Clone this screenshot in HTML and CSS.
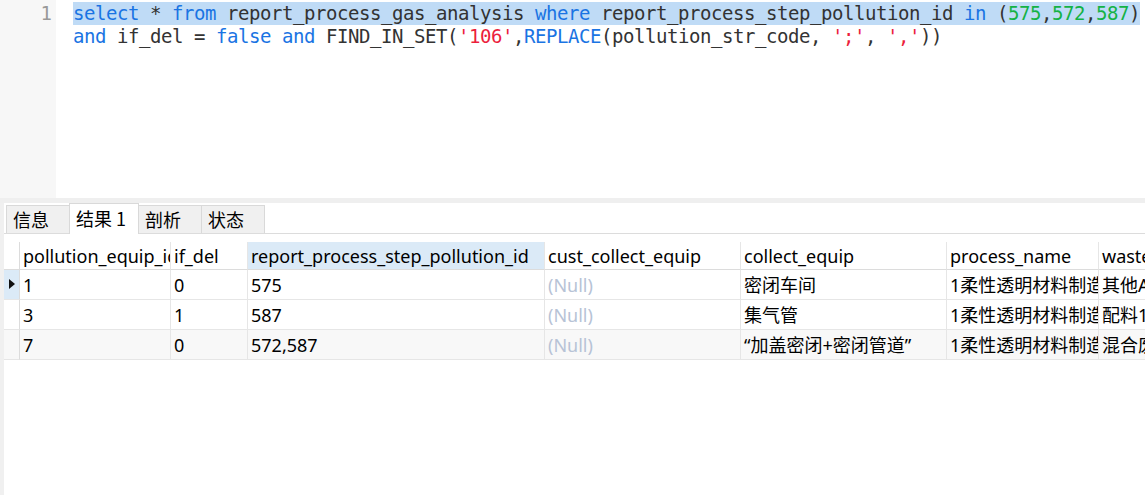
FILE: index.html
```html
<!DOCTYPE html>
<html>
<head>
<meta charset="utf-8">
<link rel="stylesheet" href="styles.css">
</head>
<body>
<div class="editor">
  <div class="gutter"><div class="ln">1</div></div>
  <div class="code">
    <div class="line"><span class="sel"><span class="kw">select</span> * <span class="kw">from</span> report_process_gas_analysis <span class="kw">where</span> report_process_step_pollution_id <span class="kw">in</span> (<span class="num">575</span>,<span class="num">572</span>,<span class="num">587</span>)</span></div>
    <div class="line"><span class="kw">and</span> if_del = <span class="kw">false</span> <span class="kw">and</span> FIND_IN_SET(<span class="str">'106'</span>,<span class="kw">REPLACE</span>(pollution_str_code, <span class="str">';'</span>, <span class="str">','</span>))</div>
  </div>
</div>
<div class="sep"></div>
<div class="results">
  <div class="tabs">
    <div class="tab">信息</div>
    <div class="tab active">结果 1</div>
    <div class="tab">剖析</div>
    <div class="tab">状态</div>
  </div>
  <div class="grid">
    <div class="c ind hd"></div>
    <div class="c hd">pollution_equip_id</div>
    <div class="c hd">if_del</div>
    <div class="c hd sorted">report_process_step_pollution_id</div>
    <div class="c hd">cust_collect_equip</div>
    <div class="c hd">collect_equip</div>
    <div class="c hd">process_name</div>
    <div class="c hd last">waste_gas_name</div>

    <div class="c ind cur"><span class="tri"></span></div>
    <div class="c">1</div>
    <div class="c">0</div>
    <div class="c">575</div>
    <div class="c null">(Null)</div>
    <div class="c">密闭车间</div>
    <div class="c">1柔性透明材料制造</div>
    <div class="c last">其他A</div>

    <div class="c ind"></div>
    <div class="c">3</div>
    <div class="c">1</div>
    <div class="c">587</div>
    <div class="c null">(Null)</div>
    <div class="c">集气管</div>
    <div class="c">1柔性透明材料制造</div>
    <div class="c last">配料1</div>

    <div class="c ind alt"></div>
    <div class="c alt">7</div>
    <div class="c alt">0</div>
    <div class="c alt">572,587</div>
    <div class="c alt null">(Null)</div>
    <div class="c alt">“加盖密闭+密闭管道”</div>
    <div class="c alt">1柔性透明材料制造</div>
    <div class="c alt last">混合废气</div>
  </div>
</div>
</body>
</html>
```
FILE: styles.css
```css
html, body {
  margin: 0;
  padding: 0;
  background: #ffffff;
}
body {
  width: 1145px;
  height: 495px;
  overflow: hidden;
}
.editor {
  display: flex;
  height: 198px;
  background: #ffffff;
}
.gutter {
  width: 56px;
  flex: none;
  background: #f7f7f7;
  padding-top: 2px;
  box-sizing: border-box;
}
.ln {
  height: 23px;
  line-height: 23px;
  text-align: right;
  padding-right: 4px;
  font-family: "DejaVu Sans Mono", "Liberation Mono", monospace;
  font-size: 19px;
  color: #999999;
}
.code {
  padding-top: 2px;
  padding-left: 17px;
  font-family: "DejaVu Sans Mono", "Liberation Mono", monospace;
  font-size: 19px;
  letter-spacing: -0.44px;
  color: #333333;
}
.line {
  height: 23px;
  line-height: 23px;
  white-space: pre;
}
.sel {
  display: inline-block;
  height: 23px;
  background: #bfdbf6;
}
.kw { color: #1a74e3; }
.num { color: #14b245; }
.str { color: #ec1e3c; }
.sep {
  height: 5px;
  background: #efefef;
}
.results {
  border-left: 4px solid #f0f0f0;
  height: 292px;
  font-family: "Noto Sans", "Noto Sans CJK SC", sans-serif;
  font-size: 18px;
  color: #000000;
}
.tabs {
  display: flex;
  align-items: flex-end;
  height: 30px;
  padding-left: 2px;
  border-bottom: 1px solid #dcdcdc;
}
.tab {
  box-sizing: border-box;
  height: 28px;
  width: 64px;
  padding-left: 6px;
  line-height: 27px;
  background: #f0f0f0;
  border: 1px solid #d9d9d9;
  border-bottom: none;
  margin-right: -1px;
  font-family: "Noto Sans CJK SC", sans-serif;
  font-size: 18px;
}
.tab.active {
  height: 31px;
  width: 70px;
  margin-bottom: -1px;
  background: #ffffff;
  position: relative;
  line-height: 28px;
}
.grid {
  margin-top: 8px;
  display: grid;
  grid-template-columns: 16px 151px 77px 297px 196px 206px 152px 1fr;
  grid-auto-rows: 30px;
  grid-template-rows: 28px;
}
.c {
  box-sizing: border-box;
  border-right: 1px solid #e6e6e6;
  border-bottom: 1px solid #e6e6e6;
  padding-left: 3px;
  line-height: 30px;
  white-space: nowrap;
  overflow: hidden;
}
.c.last { border-right: none; }
.hd {
  line-height: 28px;
  border-bottom: 1px solid #dcdcdc;
}
.sorted { background: #dbeaf7; }
.ind {
  padding-left: 0;
  border-right: 1px solid #dcdcdc;
  position: relative;
}
.ind.cur { background: #dbeaf7; }
.tri {
  position: absolute;
  left: 5px;
  top: 9px;
  width: 0;
  height: 0;
  border-top: 5px solid transparent;
  border-bottom: 5px solid transparent;
  border-left: 6px solid #111111;
}
.alt { background: #f8f8f8; }
.null { color: #b7c3d6; }
```
